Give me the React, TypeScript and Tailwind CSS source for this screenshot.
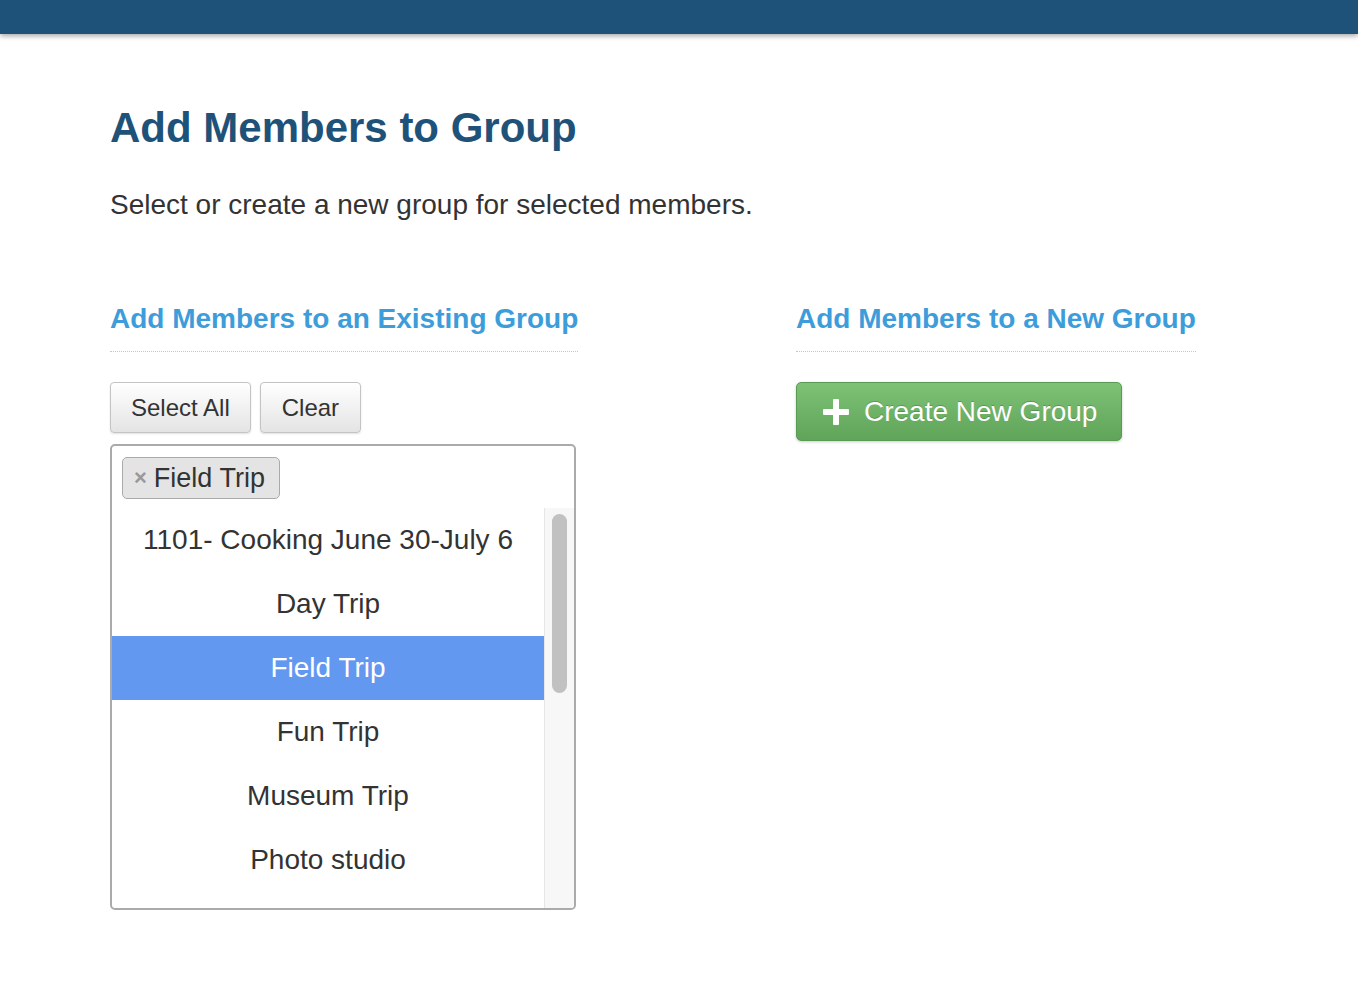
const groups = [
  "1101- Cooking June 30-July 6",
  "Day Trip",
  "Field Trip",
  "Fun Trip",
  "Museum Trip",
  "Photo studio",
];

const selected = "Field Trip";

function PlusIcon() {
  return (
    <svg width="26" height="26" viewBox="0 0 26 26" className="shrink-0">
      <rect x="10" y="0" width="6" height="26" rx="1" fill="white" />
      <rect x="0" y="10" width="26" height="6" rx="1" fill="white" />
    </svg>
  );
}

export default function App() {
  return (
    <div className="min-h-screen bg-white font-['Liberation_Sans',Helvetica,Arial,sans-serif] text-[#333]">
      {/* Top bar */}
      <div className="h-[34px] bg-[#1f5279] shadow-[0_2px_5px_rgba(0,0,0,0.35)]" />

      <div className="pl-[110px] pt-[73px]">
        <h1 className="text-[42px] leading-none font-bold text-[#1f5279]">Add Members to Group</h1>
        <p className="mt-[42px] text-[28px] leading-none">Select or create a new group for selected members.</p>

        <div className="mt-[86px] flex gap-[220px]">
          {/* Existing group */}
          <div className="w-[466px]">
            <h2 className="inline-block whitespace-nowrap border-b border-dotted border-[#c8c8c8] pb-[18px] text-[28px] leading-none font-bold text-[#3d9ddb]">
              Add Members to an Existing Group
            </h2>

            <div className="mt-[30px] flex gap-[9px]">
              <button className="h-[51px] rounded-[4px] border border-[#c4c4c4] bg-gradient-to-b from-white to-[#e4e4e4] px-[20px] text-[24px] text-[#333] shadow-[0_1px_2px_rgba(0,0,0,0.12)]">
                Select All
              </button>
              <button className="h-[51px] rounded-[4px] border border-[#c4c4c4] bg-gradient-to-b from-white to-[#e4e4e4] px-[21px] text-[24px] text-[#333] shadow-[0_1px_2px_rgba(0,0,0,0.12)]">
                Clear
              </button>
            </div>

            <div className="mt-[11px] h-[466px] rounded-[5px] border-2 border-[#aaa] flex flex-col overflow-hidden">
              <div className="px-[10px] pt-[11px] pb-[9px]">
                <span className="inline-flex h-[42px] items-center gap-[7px] rounded-[5px] border border-[#aaa] bg-[#e4e4e4] pl-[11px] pr-[14px]">
                  <span className="text-[22px] leading-none font-bold text-[#999]">×</span>
                  <span className="text-[27px] leading-none text-[#333]">Field Trip</span>
                </span>
              </div>
              <div className="flex flex-1 min-h-0">
                <ul className="flex-1 overflow-hidden">
                  {groups.map((g) => (
                    <li
                      key={g}
                      className={`flex h-[64px] items-center justify-center text-[28px] ${
                        g === selected ? "bg-[#6398f0] text-white" : "text-[#333]"
                      }`}
                    >
                      {g}
                    </li>
                  ))}
                </ul>
                <div className="w-[30px] border-l border-[#e6e6e6] bg-[#f7f7f7] px-[7px] pt-[6px]">
                  <div className="h-[179px] rounded-full bg-[#c1c1c1]" />
                </div>
              </div>
            </div>
          </div>

          {/* New group */}
          <div>
            <h2 className="inline-block whitespace-nowrap border-b border-dotted border-[#c8c8c8] pb-[18px] text-[28px] leading-none font-bold text-[#3d9ddb]">
              Add Members to a New Group
            </h2>
            <div className="mt-[30px]">
              <button className="flex h-[59px] items-center gap-[15px] rounded-[5px] border border-[#5a9a54] bg-gradient-to-b from-[#7dc275] to-[#60a45a] pl-[26px] pr-[24px] text-[28px] text-white shadow-[0_1px_3px_rgba(0,0,0,0.2)] [text-shadow:0_-1px_0_rgba(0,0,0,0.2)]">
                <PlusIcon />
                Create New Group
              </button>
            </div>
          </div>
        </div>
      </div>
    </div>
  );
}
